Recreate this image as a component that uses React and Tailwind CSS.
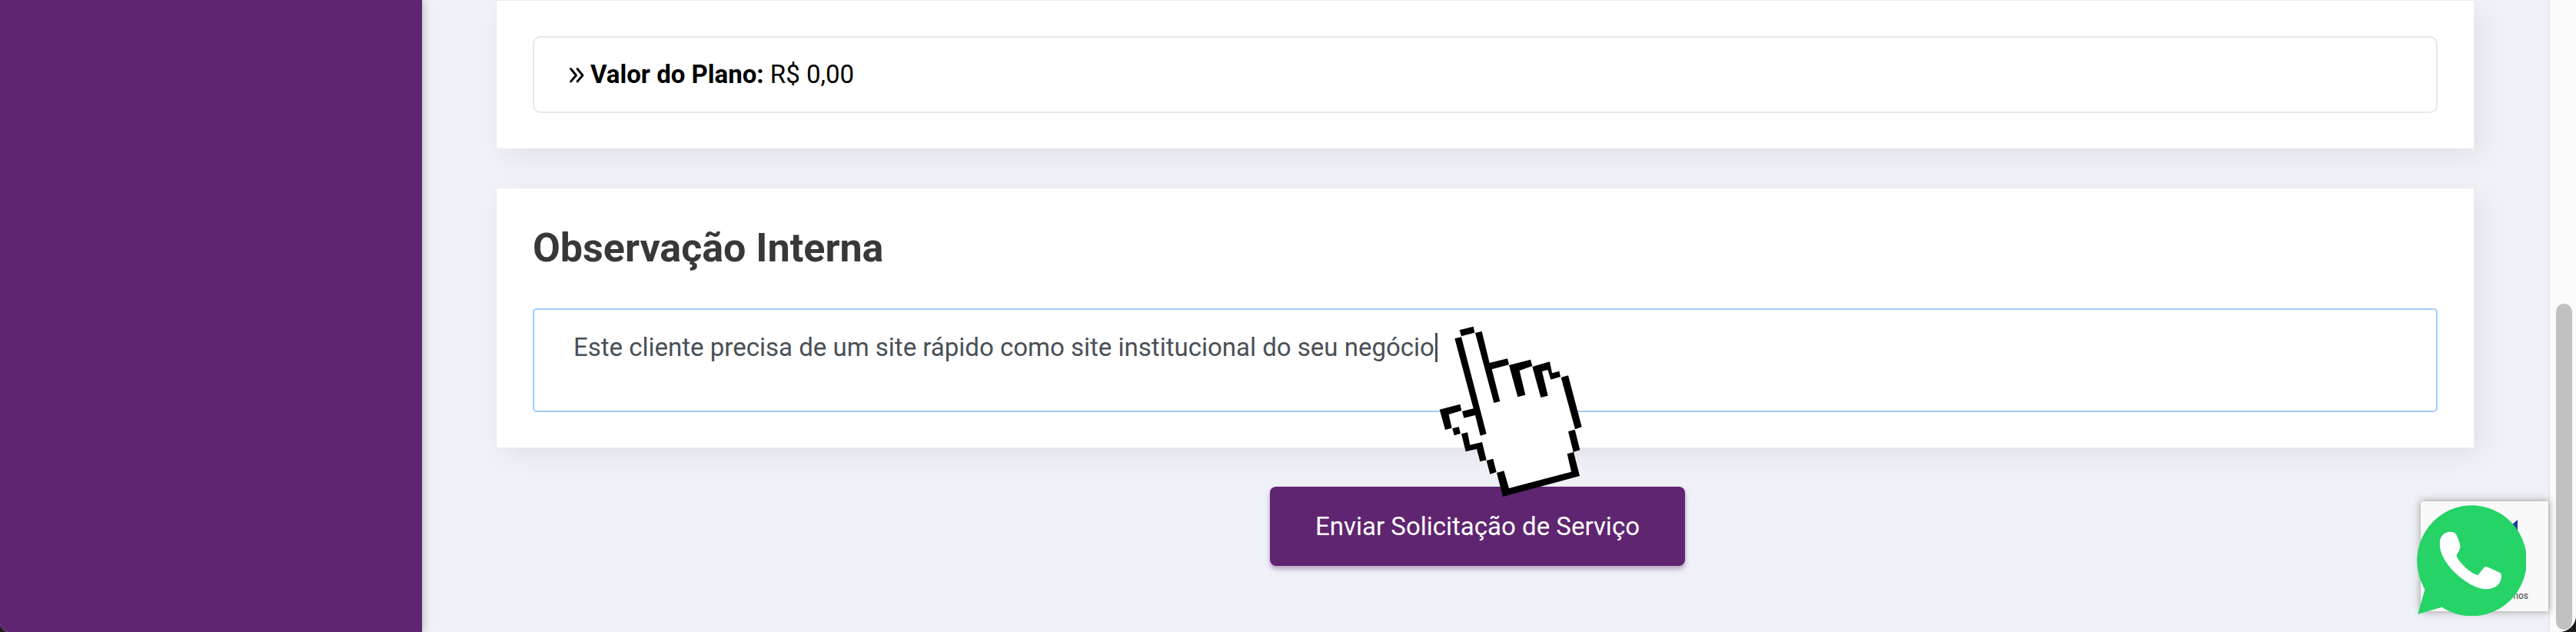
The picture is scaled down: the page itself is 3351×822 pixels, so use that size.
import { useState } from 'react';

function DoubleAngle() {
    return (
        <svg viewBox="0 0 20 26" className="h-[26px] w-5 shrink-0" fill="none" stroke="currentColor" strokeWidth="2.8" strokeLinecap="round" strokeLinejoin="round" aria-hidden="true">
            <path d="M2.5 5.5 9.5 14l-7 8M11 5.5l7 8.5-7 8" />
        </svg>
    );
}

function HandPointer() {
    return (
        <svg viewBox="90 60 570 690" className="pointer-events-none absolute left-[1870px] top-[420px] z-20 h-[230px] w-[190px]" aria-hidden="true">
            <path
                fill="#fff"
                d="M178 89 230 76 237 100 262 96 290 215 363 201 370 224 453 205 460 230 528 213 538 256 565 250 572 272 599 267 651 467 624 475 644 556 619 564 643 655 346 736 323 643 295 648 282 597 257 599 246 551 201 560 183 492 154 497 147 470 121 475 99 398 178 379 184 403 230 392 159 121 183 114Z"
            />
            <g fill="#000">
                <path d="M176 88 230 74 235 98 183 112Z" />
                <path d="M157 121 183 115 281 493 257 500 237 420 193 431 186 405 230 394Z" />
                <path d="M237 99 263 93 293 216 363 199 369 223 302 241 334 366 310 372Z" />
                <path d="M369 225 453 203 460 228 410 246 433 341 403 349Z" />
                <path d="M460 231 528 211 537 256 565 248 570 270 532 281 520 243 498 249 521 344 493 351Z" />
                <path d="M572 273 600 265 653 466 627 475Z" />
                <path d="M600 484 626 476 646 556 620 564Z" />
                <path d="M596 571 621 564 645 657 345 738 321 645 349 637 369 705 612 641Z" />
                <path d="M281 597 307 590 320 642 295 650Z" />
                <path d="M183 493 207 487 217 536 264 525 281 595 256 601 243 552 200 562Z" />
                <path d="M148 472 173 465 180 491 155 499Z" />
                <path d="M98 398 178 377 184 402 134 417 146 470 120 477Z" />
            </g>
        </svg>
    );
}

function WhatsAppIcon() {
    return (
        <svg viewBox="278 104 436 440" className="h-[146px] w-[145px]" aria-hidden="true">
            <path fill="#25d366" d="M290 537 318 440A215 217 0 1 1 385 510Z" />
            <path
                fill="#fff"
                d="M413 215c12-2 22 1 27 9 6 11 11 24 15 38 4 13 0 24-7 34-5 7-8 11-4 18 18 30 44 54 75 69 5 2 8 1 11-3l19-24c4-5 9-6 15-3l46 21c6 3 8 7 8 13 0 32-24 51-56 52-30 1-62-13-95-38-38-28-71-66-85-106-6-18-8-38-3-53 6-16 18-25 34-27Z"
            />
        </svg>
    );
}

function Card({ children }) {
    return (
        <section className="border border-[#ebebf2] bg-white px-[47px] pb-[46px] pt-[46px] shadow-[10px_10px_30px_-6px_rgba(60,60,70,0.1)]">
            {children}
        </section>
    );
}

function CornerWidgets() {
    return (
        <div className="absolute bottom-[27px] right-9 z-10">
            <div className="flex h-[143px] w-[166px] flex-col items-end justify-between rounded-l bg-[#f9f9f9] pb-3 pr-[26px] pt-6 shadow-[0_0_10px_1px_rgba(128,128,128,0.7)]">
                <svg viewBox="0 0 28 24" className="h-6 w-7" aria-hidden="true">
                    <path fill="#1c3aa9" d="M14 0v24L0 12Z" />
                </svg>
                <p className="text-[12px] leading-4 text-[#444]">Termos</p>
            </div>
            <a href="#whatsapp" aria-label="WhatsApp" className="absolute -bottom-[6px] -left-2">
                <WhatsAppIcon />
            </a>
        </div>
    );
}

export default function App() {
    const [note, setNote] = useState('Este cliente precisa de um site rápido como site institucional do seu negócio');

    return (
        <div className="bg-[#1c1c1c]">
            <div className="relative flex h-screen overflow-hidden rounded-bl-[12px] rounded-br-[22px] bg-[#f0f1f7] font-['Roboto',sans-serif] text-[33px] leading-[48px]">
                <aside className="z-10 w-[549px] shrink-0 bg-[#5f2571] shadow-[0_0_12px_rgba(0,0,0,0.3)]" />

                <main className="flex min-w-0 flex-1 flex-col gap-[50px] pl-24 pr-24">
                    <Card>
                        <div className="flex h-[100px] items-center gap-2 rounded-[10px] border-2 border-[#e8e8e8] px-[45px] text-black">
                            <DoubleAngle />
                            <p><strong className="font-bold">Valor do Plano:</strong> R$ 0,00</p>
                        </div>
                    </Card>

                    <Card>
                        <h2 className="text-[52px] font-bold leading-[64px] text-[#383838]">
                            <label htmlFor="note">Observação Interna</label>
                        </h2>
                        <div className="relative mt-[46px]">
                            <textarea
                                id="note"
                                value={note}
                                onChange={(e) => setNote(e.target.value)}
                                className="block h-[135px] w-full resize-none rounded-[5px] border-2 border-[#9fcdff] bg-white px-[51px] py-[25px] text-[#495057] outline-none"
                            />
                            <span className="absolute left-[1174px] top-8 h-[38px] w-[3px] bg-[#495057]" />
                        </div>
                    </Card>

                    <div className="flex justify-center pr-[20px]">
                        <button type="button" className="h-[103px] rounded-lg bg-[#5f2571] px-[59px] text-white shadow-[0_4px_6px_rgba(95,37,113,0.4)]">
                            Enviar Solicitação de Serviço
                        </button>
                    </div>
                </main>

                <div className="z-10 flex w-9 shrink-0 justify-end border-l-2 border-[#e8e8ec] bg-[#fafafa] pb-[3px] pr-[5px] pt-[395px]">
                    <div className="w-[21px] rounded-full bg-[#c1c1c1]" />
                </div>

                <CornerWidgets />
                <HandPointer />
            </div>
        </div>
    );
}
